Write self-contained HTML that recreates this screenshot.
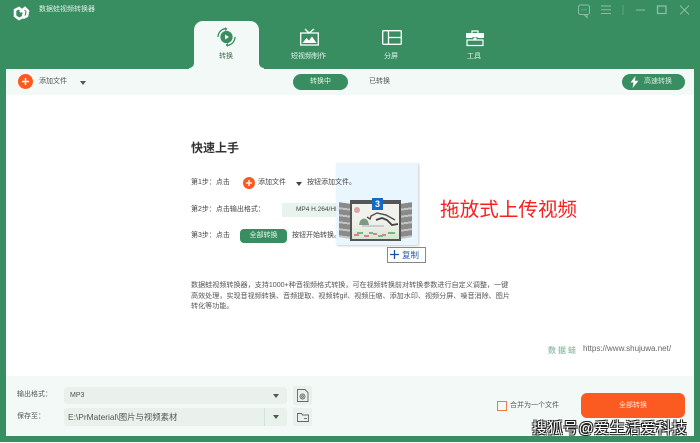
<!DOCTYPE html>
<html><head><meta charset="utf-8"><style>
*{margin:0;padding:0;box-sizing:border-box}
html,body{width:700px;height:443px;overflow:hidden}
body{position:relative;background:#388e60;font-family:"Liberation Sans","Noto Sans CJK SC",sans-serif;color:#444}
.a{position:absolute;white-space:nowrap}
.t{font-size:7px;line-height:10px}
svg{position:absolute;overflow:visible}
</style></head><body>
<div class="a" style="left:0;top:442px;width:700px;height:1px;background:#fff"></div>
<!-- Title -->
<svg style="left:13px;top:3px" width="16" height="20" viewBox="0 0 16 20" fill="none" stroke="#fff" stroke-width="2.6"><path d="M2 7l4-2 5 4-1 5-4 2-4-3z"/><path d="M7 9l5-4 3 3-1 5-4 2"/></svg>
<div class="a t" style="left:39px;top:5px;color:#dfeee6">数据蛙视频转换器</div>
<!-- Window controls -->
<svg style="left:578px;top:4px" width="122" height="20" viewBox="0 0 122 20" fill="none" stroke="#8cbda3" stroke-width="1"><rect x=".5" y="1" width="11" height="9.5" rx="2"/><path d="M6 10.5l3 3v-3"/><path d="M3.5 5.7h1M5.5 5.700h1M7.500 5.700h1"/><path d="M23 2h10M23 5.700h10M23 9.500h10"/><path d="M45 1v10" stroke="#5da67f"/><path d="M58 6h9"/><rect x="79.500" y="2" width="8.500" height="7.500" stroke-width="1.300"/><path d="M102 1.500l9 9M111 1.500l-9 9"/></svg>
<!-- Tabs -->
<div class="a" style="left:194px;top:21px;width:65px;height:49px;background:#f3f9f6;border-radius:9px 9px 0 0"></div>
<div class="a" style="left:189px;top:63px;width:5px;height:6px;background:radial-gradient(circle at 0 0,#388e60 4.800px,#f3f9f6 5.200px)"></div>
<div class="a" style="left:259px;top:63px;width:5px;height:6px;background:radial-gradient(circle at 100% 0,#388e60 4.800px,#f3f9f6 5.200px)"></div>
<svg style="left:217px;top:27px" width="20" height="20" viewBox="0 0 20 20" fill="none" stroke="#388e60" stroke-width="1.300"><circle cx="9.500" cy="10" r="5.500" fill="#388e60"/><path d="M8 7.500l4 2.500-4 2.500z" fill="#fff" stroke="none"/><path d="M1 10a8.500 8.500 0 0 1 7-8.300M18 10a8.500 8.500 0 0 1-7 8.300"/><path d="M8 0v4l2.500-2zM11 16v4l-2.500-2z" fill="#388e60" stroke="none"/></svg>
<div class="a t" style="left:219px;top:52px;color:#3c6d54">转换</div>
<svg style="left:300px;top:28px" width="19" height="18" viewBox="0 0 19 18" fill="none" stroke="#fff" stroke-width="1.300"><rect x=".7" y="5" width="17.600" height="12"/><path d="M5 1l4 4 5-4"/><path d="M2.500 15l4-5 2.500 2.500 3-4 4.500 6.500z" fill="#fff" stroke="none"/></svg>
<div class="a t" style="left:291px;top:52px;color:#e6f2ec">短视频制作</div>
<svg style="left:382px;top:30px" width="20" height="15" viewBox="0 0 20 15" fill="none" stroke="#fff" stroke-width="1.300"><rect x=".7" y=".7" width="18.600" height="13.600" rx="1"/><path d="M6.500 1v13M6.500 7.500h13"/></svg>
<div class="a t" style="left:384px;top:52px;color:#e6f2ec">分屏</div>
<svg style="left:466px;top:30px" width="18" height="16" viewBox="0 0 18 16" fill="none"><path d="M6 3V1h6v2" stroke="#fff" stroke-width="1.200"/><path d="M0 3h18v5h-6.500V7h-5v1H0z" fill="#fff"/><path d="M1 10h16M1 9.500v6h16v-6" stroke="#fff" stroke-width="1.200"/><rect x="7.500" y="7.500" width="3" height="3" fill="#fff"/></svg>
<div class="a t" style="left:467px;top:52px;color:#e6f2ec">工具</div>
<!-- Main -->
<div class="a" style="left:6px;top:69px;width:688px;height:26px;background:#f3f9f6"></div>
<div class="a" style="left:6px;top:95px;width:688px;height:281px;background:#fff"></div>
<div class="a" style="left:6px;top:376px;width:688px;height:60px;background:#f3f9f6"></div>
<!-- Toolbar -->
<div class="a" style="left:18px;top:74px;width:15px;height:15px;border-radius:50%;background:#fb5a21"></div>
<svg style="left:22px;top:78px" width="7" height="7"><path d="M3.500 0v7M0 3.500h7" stroke="#fff" stroke-width="1.400"/></svg>
<div class="a t" style="left:39px;top:77px;color:#555">添加文件</div>
<svg style="left:80px;top:81px" width="6" height="4"><path d="M0 0h6L3 4z" fill="#555"/></svg>
<div class="a t" style="left:293px;top:74px;width:55px;height:16px;border-radius:8px;background:#388e60;color:#e8f4ee;text-align:center;line-height:16px">转换中</div>
<div class="a t" style="left:369px;top:77px;color:#555">已转换</div>
<div class="a" style="left:622px;top:74px;width:63px;height:16px;border-radius:8px;background:#388e60"></div>
<svg style="left:630px;top:76px" width="9" height="12"><path d="M5.500 0L.5 6.500h3L2.500 12 8.500 4.800H5z" fill="#fff"/></svg>
<div class="a t" style="left:644px;top:77px;color:#d8ebe1">高速转换</div>
<!-- Quick start -->
<div class="a" style="left:191px;top:140px;font-size:12px;line-height:16px;font-weight:700;color:#333">快速上手</div>
<div class="a t" style="left:191px;top:178px">第1步：点击</div>
<div class="a" style="left:243px;top:177px;width:12px;height:12px;border-radius:50%;background:#fb5a21"></div>
<svg style="left:246px;top:180px" width="6" height="6"><path d="M3 0v6M0 3h6" stroke="#fff" stroke-width="1.300"/></svg>
<div class="a t" style="left:258px;top:178px">添加文件</div>
<svg style="left:296px;top:182px" width="6" height="4"><path d="M0 0h6L3 4z" fill="#444"/></svg>
<div class="a t" style="left:307px;top:178px">按钮添加</div>
<div class="a t" style="left:191px;top:205px">第2步：点击输出格式：</div>
<div class="a" style="left:282px;top:203px;width:65px;height:14px;background:#e8f3ed"></div>
<div class="a t" style="left:296px;top:205px;font-size:6.500px">MP4 H.264/HEVC</div>
<div class="a t" style="left:191px;top:231px">第3步：点击</div>
<div class="a t" style="left:240px;top:229px;width:47px;height:14px;background:#388e60;border-radius:4px;color:#e8f4ee;text-align:center;line-height:14px">全部转换</div>
<div class="a t" style="left:292px;top:231px">按钮开始转换。</div>
<!-- Drag card -->
<div class="a" style="left:336px;top:163px;width:82px;height:82px;background:rgba(232,245,253,.9);box-shadow:1px 1px 2px #ccc"></div>
<div class="a t" style="left:335px;top:178px">文件。</div>
<div class="a" style="left:339px;top:203px;width:12px;height:35px;background:repeating-linear-gradient(#8a8a8a 0 5px,#c4c4c4 5px 7px);transform:skewY(8deg)"></div>
<div class="a" style="left:400px;top:203px;width:12px;height:35px;background:repeating-linear-gradient(#8a8a8a 0 5px,#c4c4c4 5px 7px);transform:skewY(-8deg)"></div>
<div class="a" style="left:350px;top:200px;width:51px;height:41px;background:#555"></div>
<div class="a" style="left:352px;top:204px;width:47px;height:35px;background:linear-gradient(#f2f2ec 0 45%,#e9ede4 70%,#d5e6d2)"></div>
<svg style="left:352px;top:204px" width="47" height="35" fill="none"><path d="M15 13l3 2 1-3 6-3 9 2 9 5" stroke="#555" stroke-width="1.500"/><path d="M24 16l6-2 5 2 5 5 6-1" stroke="#444" stroke-width="1.800"/><path d="M8 17q4-5 8 0l1 4H7z" fill="#7d9a86"/><circle cx="5" cy="6" r="3" fill="#d9a5a5"/><path d="M10 22h22" stroke="#c9ced0" stroke-width="2"/><path d="M2 31h5M12 32h5M21 30h4M30 31h4" stroke="#d97f9c" stroke-width="2"/><path d="M5 29h6M17 29h4M26 32h5M36 29h7" stroke="#79b77f" stroke-width="2"/></svg>
<div class="a" style="left:372px;top:198px;width:11px;height:12px;background:#1469c4;color:#fff;font-size:9px;font-weight:700;line-height:12px;text-align:center">3</div>
<div class="a" style="left:387px;top:247px;width:39px;height:16px;background:#fff;border:1px solid #888"></div>
<svg style="left:390px;top:250px" width="9" height="9"><path d="M4.500 0v9M0 4.500h9" stroke="#1c4fa0" stroke-width="1.300"/></svg>
<div class="a" style="left:402px;top:250px;font-size:8.500px;line-height:11px;color:#2a5aa8">复制</div>
<div class="a" style="left:440px;top:199px;font-size:19.600px;line-height:22px;color:#f5201f">拖放式上传视频</div>
<!-- Description -->
<div class="a" style="left:191px;top:280px;width:325px;font-size:7.080px;line-height:10.700px;color:#555;white-space:normal">数据蛙视频转换器，支持1000+种音视频格式转换，可在视频转换前对转换参数进行自定义调整，一键<br>高效处理，实现音视频转换、音频提取、视频转gif、视频压缩、添加水印、视频分屏、噪音消除、图片<br>转化等功能。</div>
<div class="a" style="left:548px;top:345px;font-size:8px;line-height:11px;color:#9ac5ae;letter-spacing:2px;font-weight:700">数据蛙</div>
<div class="a" style="left:583px;top:344px;font-size:8px;line-height:10px;color:#666">https://www.shujuwa.net/</div>
<!-- Footer -->
<div class="a t" style="left:17px;top:390px;color:#555">输出格式：</div>
<div class="a" style="left:64px;top:387px;width:223px;height:17px;background:#e8f1ec;border-radius:3px"></div>
<div class="a" style="left:70px;top:391px;font-size:7px;line-height:9px;color:#555">MP3</div>
<svg style="left:273px;top:394px" width="6" height="4"><path d="M0 0h6L3 4z" fill="#555"/></svg>
<div class="a" style="left:293px;top:386px;width:19px;height:19px;background:#e8f1ec;border-radius:2px"></div>
<svg style="left:297px;top:389px" width="12" height="13" fill="none" stroke="#666" stroke-width=".9"><path d="M.5.500h7.500l3 3v9h-10.500z"/><circle cx="5.500" cy="7.500" r="2.500"/><circle cx="5.500" cy="7.500" r=".9"/></svg>
<div class="a t" style="left:17px;top:412px;color:#555">保存至：</div>
<div class="a" style="left:64px;top:408px;width:223px;height:18px;background:#e8f1ec;border-radius:3px"></div>
<div class="a" style="left:264px;top:408px;width:1px;height:18px;background:#cfe3d8"></div>
<div class="a" style="left:68px;top:412px;font-size:8.400px;line-height:10px;color:#555">E:\PrMaterial\图片与视频素材</div>
<svg style="left:273px;top:415px" width="6" height="4"><path d="M0 0h6L3 4z" fill="#555"/></svg>
<div class="a" style="left:293px;top:408px;width:19px;height:18px;background:#e8f1ec;border-radius:2px"></div>
<svg style="left:297px;top:412px" width="12" height="10" fill="none" stroke="#666" stroke-width=".9"><path d="M.5 1.500h4l1 1.500h6v6.500h-11z"/><path d="M7 6.500h3"/></svg>
<div class="a" style="left:497px;top:401px;width:10px;height:10px;border:1.300px solid #f47a45"></div>
<div class="a t" style="left:510px;top:401px;color:#555">合并为一个文件</div>
<div class="a t" style="left:581px;top:393px;width:104px;height:25px;background:#fb5a21;border-radius:6px;color:#ffe9dd;text-align:center;line-height:25px">全部转换</div>
<!-- Watermark -->
<div class="a" style="left:532px;top:419px;font-size:15px;line-height:20px;color:#fff;letter-spacing:.5px;text-shadow:-1px -1px 0 #222,1px -1px 0 #222,-1px 1px 0 #222,1px 1px 0 #222">搜狐号@爱生活爱科技</div>
</body></html>
